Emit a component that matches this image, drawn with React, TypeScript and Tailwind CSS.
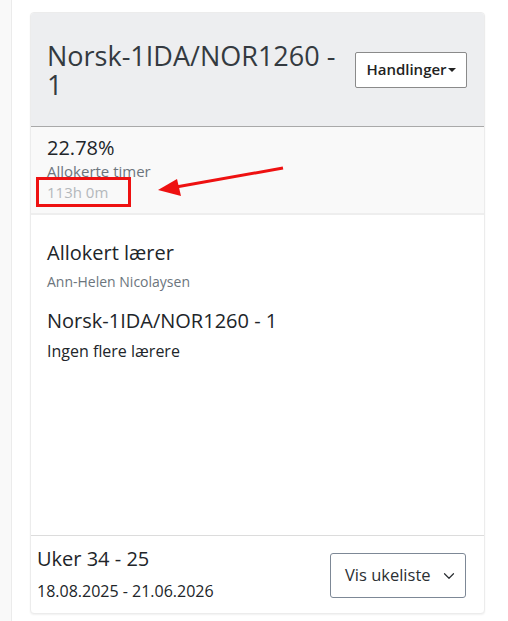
import { ChevronDown } from "lucide-react";

const App = () => {
  return (
    <div className="relative flex min-h-[621px] w-[508px] bg-white font-['Open_Sans',sans-serif]">
      <div className="w-3 shrink-0 border-r border-[#ebebeb] bg-[#f9f9f9]" />
      <div className="ml-[18px] mt-3 flex h-[602px] w-[455px] flex-col overflow-hidden rounded border border-[#ececec] bg-white shadow-[0_1px_2px_rgba(0,0,0,0.06)]">
        <div className="flex h-[113px] items-center justify-between gap-4 bg-[#edeef0] pl-4 pr-[17px]">
          <h1 className="text-[27px] leading-[29px] text-[#343a40]">Norsk-1IDA/NOR1260 - 1</h1>
          <button className="flex h-9 w-[112px] shrink-0 items-center justify-center rounded-[2px] border border-[#8a8a8a] bg-white text-[15px] font-semibold text-[#222]">
            Handlinger
            <span className="ml-[1px] mt-[1px] h-0 w-0 border-x-[4px] border-t-[4px] border-x-transparent border-t-[#222]" />
          </button>
        </div>
        <div className="border-t border-[#a9a9a9] bg-[#f9f9f9] px-4 pb-[10px] pt-[7px]">
          <div className="text-[20px] leading-[27px] text-[#212529]">22.78%</div>
          <div className="text-[15px] leading-[21px] text-[#6c757d]">Allokerte timer</div>
          <div className="text-[15px] leading-[21px] text-[#b4b8bc]">113h 0m</div>
        </div>
        <div className="flex-1 border-t-2 border-[#eeeeee] px-4 pt-[26px]">
          <div className="text-[20px] leading-[24px] text-[#212529]">Allokert lærer</div>
          <div className="mt-[6px] text-[14px] leading-[21px] text-[#6c757d]">Ann-Helen Nicolaysen</div>
          <div className="mt-[17px] text-[20px] leading-[24px] text-[#212529]">Norsk-1IDA/NOR1260 - 1</div>
          <div className="mt-[6px] text-[16px] leading-[24px] text-[#212529]">Ingen flere lærere</div>
        </div>
        <div className="flex h-[78px] items-center justify-between border-t border-[#dcdcdc] pl-[6px] pr-[18px]">
          <div>
            <div className="text-[20px] leading-[24px] text-[#212529]">Uker 34 - 25</div>
            <div className="mt-2 text-[16px] leading-[24px] text-[#212529]">18.08.2025 - 21.06.2026</div>
          </div>
          <button className="mb-[-2px] flex h-[45px] w-[136px] items-center gap-[9px] rounded-[3px] border border-[#7d8896] bg-white pl-[14px] text-[16.5px] font-medium text-[#2b2f33]">
            Vis ukeliste
            <ChevronDown size={18} strokeWidth={1.6} />
          </button>
        </div>
      </div>

      <div className="absolute left-[36px] top-[177px] h-[30px] w-[95px] border-[3px] border-[#ee1111]" />
      <svg className="absolute left-0 top-0" width="508" height="621" viewBox="0 0 508 621">
        <line x1="283" y1="168" x2="176" y2="187" stroke="#ee1111" strokeWidth="3" />
        <polygon points="158,190 177,179 181,196" fill="#ee1111" />
      </svg>
    </div>
  );
};

export default App;
